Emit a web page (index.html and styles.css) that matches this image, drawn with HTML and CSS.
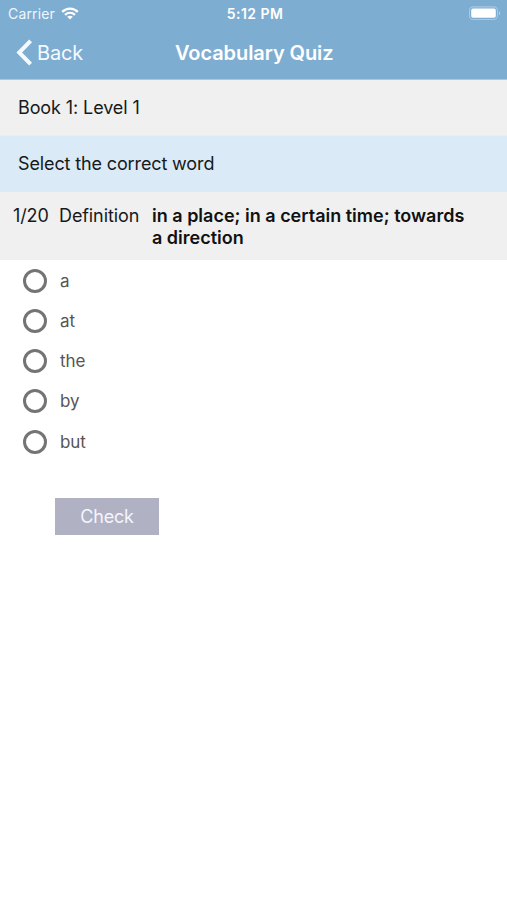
FILE: index.html
```html
<!DOCTYPE html>
<html lang="en">
<head>
<meta charset="utf-8">
<title>Vocabulary Quiz</title>
<link rel="stylesheet" href="styles.css">
</head>
<body>
<header class="header">
  <div class="status">
    <div class="carrier"><span>Carrier</span>
      <svg class="wifi" width="18" height="13" viewBox="0 0 18 13" fill="none" stroke="currentColor" stroke-width="2.3"><path d="M1.2 4.8C5.7.5 12.3.5 16.8 4.8"/><path d="M4 7.8c3-2.7 7-2.7 10 0"/><path d="M9 12.6 6.2 9.8c1.6-1.4 4-1.4 5.6 0Z" fill="currentColor" stroke="none"/></svg>
    </div>
    <div class="time">5:12 PM</div>
    <svg class="battery" width="34" height="15" viewBox="0 0 34 15"><rect x="1.5" y=".9" width="28" height="12.6" rx="3.6" fill="none" stroke="#a5c8e3" stroke-width="1.1"/><rect x="3.2" y="2.6" width="24.6" height="9.2" rx="1.8" fill="#fff"/><path d="M31 5.2c1.6.8 1.6 3.2 0 4Z" fill="#b5d3e9"/></svg>
  </div>
  <nav class="nav">
    <a class="back"><svg width="17" height="27" viewBox="0 0 17 27" fill="none" stroke="currentColor" stroke-width="4"><path d="M14.6 1.8 3.2 13.5l11.4 11.7"/></svg><span>Back</span></a>
    <h1 class="title">Vocabulary Quiz</h1>
  </nav>
</header>
<main>
  <section class="row book"><span>Book 1: Level 1</span></section>
  <section class="row prompt"><span>Select the correct word</span></section>
  <section class="question">
    <span class="count">1/20</span>
    <span class="kind">Definition</span>
    <p class="definition">in a place; in a certain time; towards<br>a direction</p>
  </section>
  <ul class="options">
    <li><i class="radio"></i><span>a</span></li>
    <li><i class="radio"></i><span>at</span></li>
    <li><i class="radio"></i><span>the</span></li>
    <li><i class="radio"></i><span>by</span></li>
    <li><i class="radio"></i><span>but</span></li>
  </ul>
  <button class="check">Check</button>
</main>
</body>
</html>
```
FILE: styles.css
```css
* { box-sizing: border-box; }
body { margin: 0; background: #fff; color: #17191b; font-family: Inter, "Liberation Sans", sans-serif; font-size: 18px; }
.header { height: 80px; background: #7eadd2; color: #fff; border-bottom: 1px solid #a9c9e1; }
.status { height: 27px; display: grid; grid-template-columns: 1fr auto 1fr; align-items: center; padding: 0 5px 0 8px; font-size: 14px; }
.carrier { display: flex; align-items: center; gap: 6px; color: #eef7ff; letter-spacing: .15px; }
.wifi { color: #fff; }
.time { font-weight: 600; letter-spacing: .45px; }
.battery { justify-self: end; }
.nav { height: 51px; display: grid; grid-template-columns: 175px 1fr; align-items: center; }
.back { display: flex; align-items: center; gap: 4px; padding-left: 16px; font-size: 20px; letter-spacing: -.15px; color: #f4faff; }
.title { margin: 0; font-size: 20px; font-weight: 600; letter-spacing: -.08px; }
.row { display: flex; align-items: center; padding-left: 18px; letter-spacing: -.1px; }
.book { height: 55px; background: #f0f0f0; }
.prompt { height: 57px; background: #daeaf7; border-top: 1px solid #e7eff6; padding-bottom: 2px; letter-spacing: -.13px; }
.question { height: 68px; background: #f0f0f0; display: grid; grid-template-columns: 46px 93px 1fr; padding: 13px 0 0 13px; line-height: 22px; }
.count, .kind { letter-spacing: -.1px; }
.definition { margin: 0; font-weight: 600; white-space: nowrap; color: #111; }
.options { list-style: none; margin: 0; padding: .4px 0 0 23px; color: #555; font-size: 17px; }
.options li { height: 40.25px; display: flex; align-items: center; gap: 13px; letter-spacing: -.1px; }
.radio { width: 24px; height: 24px; border: 3px solid #747474; border-radius: 50%; }
.check { display: block; width: 104px; height: 37px; margin: 36.6px 0 0 55px; padding: 0; border: 0; background: #b0b1c3; color: #f4f5ff; font: 18px Inter, "Liberation Sans", sans-serif; letter-spacing: -.15px; }
```
